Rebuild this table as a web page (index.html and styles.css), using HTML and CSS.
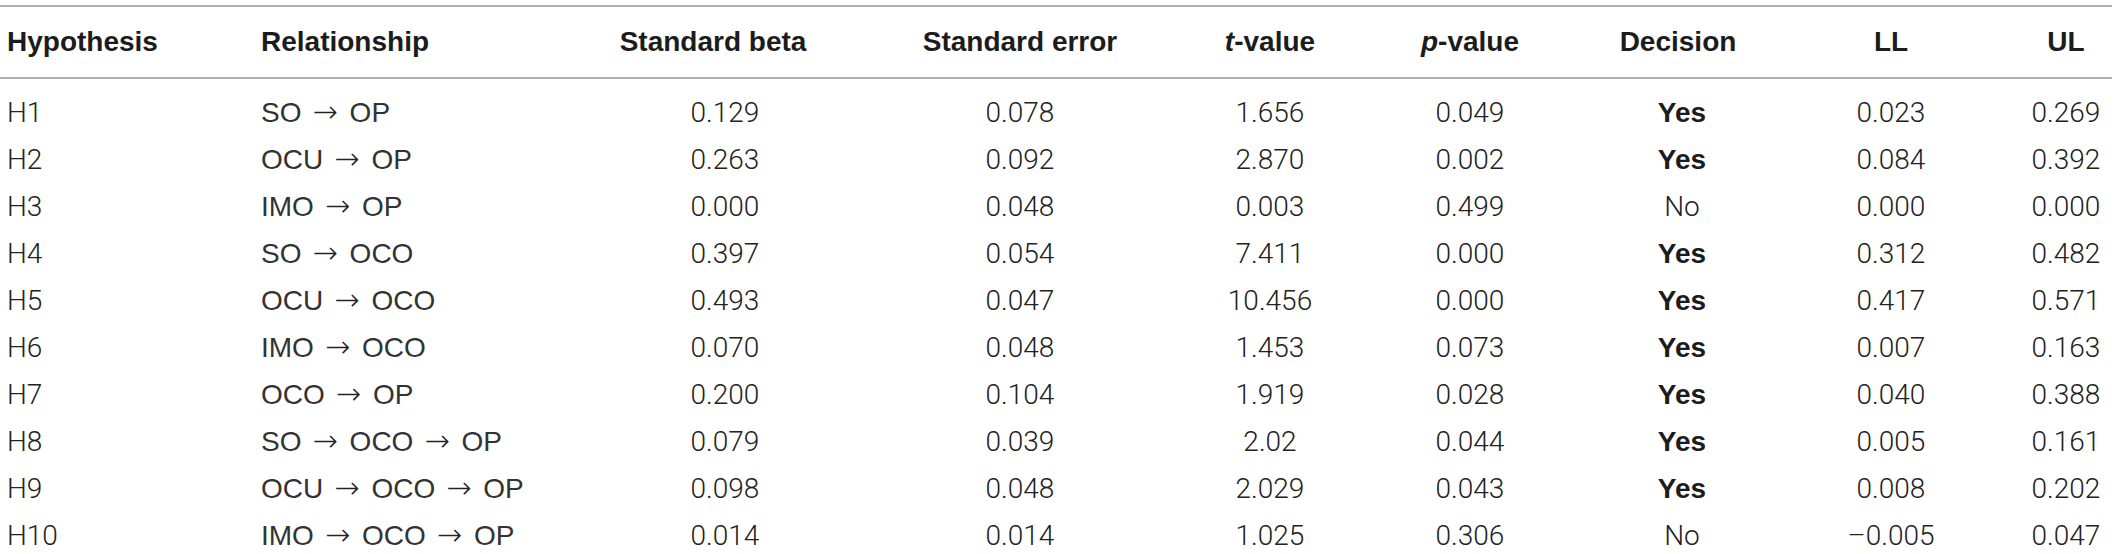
FILE: index.html
```html
<!DOCTYPE html>
<html>
<head>
<meta charset="utf-8">
<link rel="stylesheet" href="styles.css">
</head>
<body>
<table class="results">
  <colgroup>
    <col class="c1"><col class="c2"><col class="c3"><col class="c4"><col class="c5"><col class="c6"><col class="c7"><col class="c8"><col class="c9">
  </colgroup>
  <thead>
    <tr>
      <th class="left first">Hypothesis</th>
      <th class="left">Relationship</th>
      <th>Standard beta</th>
      <th>Standard error</th>
      <th><i>t</i>-value</th>
      <th><i>p</i>-value</th>
      <th>Decision</th>
      <th>LL</th>
      <th>UL</th>
    </tr>
  </thead>
  <tbody>
    <tr class="r1"><td class="left first">H1</td><td class="left rel">SO<span class="arr">→</span>OP</td><td class="beta">0.129</td><td>0.078</td><td>1.656</td><td>0.049</td><td class="dec"><b>Yes</b></td><td>0.023</td><td>0.269</td></tr>
    <tr><td class="left first">H2</td><td class="left rel">OCU<span class="arr">→</span>OP</td><td class="beta">0.263</td><td>0.092</td><td>2.870</td><td>0.002</td><td class="dec"><b>Yes</b></td><td>0.084</td><td>0.392</td></tr>
    <tr><td class="left first">H3</td><td class="left rel">IMO<span class="arr">→</span>OP</td><td class="beta">0.000</td><td>0.048</td><td>0.003</td><td>0.499</td><td class="dec">No</td><td>0.000</td><td>0.000</td></tr>
    <tr><td class="left first">H4</td><td class="left rel">SO<span class="arr">→</span>OCO</td><td class="beta">0.397</td><td>0.054</td><td>7.411</td><td>0.000</td><td class="dec"><b>Yes</b></td><td>0.312</td><td>0.482</td></tr>
    <tr><td class="left first">H5</td><td class="left rel">OCU<span class="arr">→</span>OCO</td><td class="beta">0.493</td><td>0.047</td><td>10.456</td><td>0.000</td><td class="dec"><b>Yes</b></td><td>0.417</td><td>0.571</td></tr>
    <tr><td class="left first">H6</td><td class="left rel">IMO<span class="arr">→</span>OCO</td><td class="beta">0.070</td><td>0.048</td><td>1.453</td><td>0.073</td><td class="dec"><b>Yes</b></td><td>0.007</td><td>0.163</td></tr>
    <tr><td class="left first">H7</td><td class="left rel">OCO<span class="arr">→</span>OP</td><td class="beta">0.200</td><td>0.104</td><td>1.919</td><td>0.028</td><td class="dec"><b>Yes</b></td><td>0.040</td><td>0.388</td></tr>
    <tr><td class="left first">H8</td><td class="left rel">SO<span class="arr">→</span>OCO<span class="arr">→</span>OP</td><td class="beta">0.079</td><td>0.039</td><td>2.02</td><td>0.044</td><td class="dec"><b>Yes</b></td><td>0.005</td><td>0.161</td></tr>
    <tr><td class="left first">H9</td><td class="left rel">OCU<span class="arr">→</span>OCO<span class="arr">→</span>OP</td><td class="beta">0.098</td><td>0.048</td><td>2.029</td><td>0.043</td><td class="dec"><b>Yes</b></td><td>0.008</td><td>0.202</td></tr>
    <tr><td class="left first">H10</td><td class="left rel">IMO<span class="arr">→</span>OCO<span class="arr">→</span>OP</td><td class="beta">0.014</td><td>0.014</td><td>1.025</td><td>0.306</td><td class="dec">No</td><td>–0.005</td><td>0.047</td></tr>
  </tbody>
</table>
</body>
</html>
```

FILE: styles.css
```css
html, body {
  margin: 0;
  padding: 0;
  background: #ffffff;
}

body {
  font-family: "Liberation Sans", Arial, sans-serif;
  font-size: 28px;
  color: #262626;
}

.results {
  margin-top: 5px;
  width: 2112px;
  border-collapse: collapse;
  table-layout: fixed;
  border-top: 2px solid #b0b0b0;
}

.c1 { width: 261px; }
.c2 { width: 319px; }
.c3 { width: 266px; }
.c4 { width: 348px; }
.c5 { width: 152px; }
.c6 { width: 248px; }
.c7 { width: 168px; }
.c8 { width: 258px; }
.c9 { width: 92px; }

.results th {
  height: 70px;
  padding: 0;
  font-weight: bold;
  color: #1c1c1c;
  text-align: center;
  vertical-align: middle;
  white-space: nowrap;
  border-bottom: 2px solid #b0b0b0;
}

.results td {
  height: 47px;
  padding: 0;
  font-family: Roboto, "Liberation Sans", Arial, sans-serif;
  font-weight: 300;
  color: #222222;
  text-align: center;
  vertical-align: middle;
  white-space: nowrap;
  line-height: 32px;
}

.results .r1 td {
  padding-top: 10px;
}

.results .left {
  text-align: left;
}

.results .first {
  padding-left: 7px;
}

.results td.rel {
  font-family: "Liberation Sans", Arial, sans-serif;
  font-weight: normal;
  color: #333333;
}

.results td.beta {
  padding-left: 24px;
}

.results td.dec {
  padding-left: 8px;
}

.results b {
  font-family: "Liberation Sans", Arial, sans-serif;
  font-weight: bold;
  color: #1c1c1c;
}

.arr {
  display: inline-block;
  font-family: "DejaVu Sans", sans-serif;
  font-weight: 200;
  font-size: 30px;
  margin: 0 12px 0 11px;
  color: #222222;
}
```
